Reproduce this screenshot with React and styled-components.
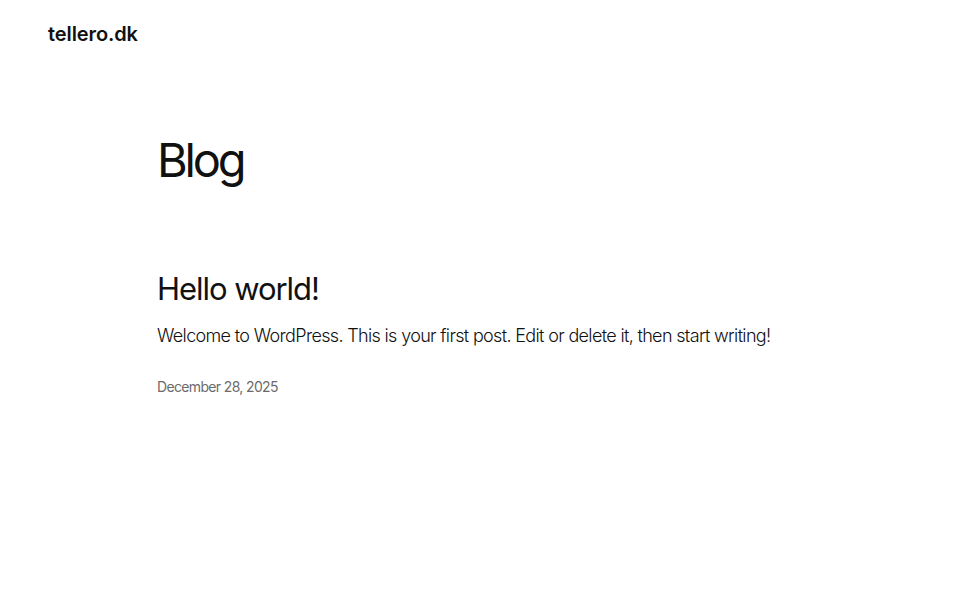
import styled, { createGlobalStyle } from 'styled-components';

const GlobalStyle = createGlobalStyle`
  html, body {
    margin: 0;
    padding: 0;
    background: #fff;
  }
  body {
    font-family: 'Inter', 'Noto Sans', sans-serif;
    color: #111111;
    -webkit-font-smoothing: antialiased;
  }
`;

const Header = styled.header`
  display: flex;
  align-items: center;
  height: 68px;
  padding: 0 48px;
`;

const SiteTitle = styled.a`
  font-size: 20px;
  font-weight: 600;
  letter-spacing: -0.1px;
  color: #111111;
  text-decoration: none;
`;

const Main = styled.main`
  display: flex;
  flex-direction: column;
  padding: 0 157px;
`;

const PageTitle = styled.h1`
  margin: 66px 0 0;
  font-size: 47px;
  font-weight: 400;
  line-height: 1.1;
  letter-spacing: -3.2px;
`;

const PostList = styled.ul`
  list-style: none;
  margin: 84px 0 0;
  padding: 0;
`;

const Post = styled.li`
  display: flex;
  flex-direction: column;
`;

const PostTitle = styled.h2`
  margin: 0;
  font-size: 31px;
  font-weight: 400;
  line-height: 1.2;
  letter-spacing: -1.05px;
`;

const Excerpt = styled.p`
  margin: 16px 0 0;
  font-size: 18px;
  font-weight: 300;
  line-height: 1.4;
  letter-spacing: -0.66px;
`;

const PostDate = styled.time`
  margin-top: 30px;
  font-size: 14px;
  font-weight: 400;
  letter-spacing: -0.65px;
  color: #6b6b6b;
`;

export default function App() {
  return (
    <>
      <GlobalStyle />
      <Header>
        <SiteTitle href="#">tellero.dk</SiteTitle>
      </Header>
      <Main>
        <PageTitle>Blog</PageTitle>
        <PostList>
          <Post>
            <PostTitle>Hello world!</PostTitle>
            <Excerpt>
              Welcome to WordPress. This is your first post. Edit or delete it, then start writing!
            </Excerpt>
            <PostDate>December 28, 2025</PostDate>
          </Post>
        </PostList>
      </Main>
    </>
  );
}
